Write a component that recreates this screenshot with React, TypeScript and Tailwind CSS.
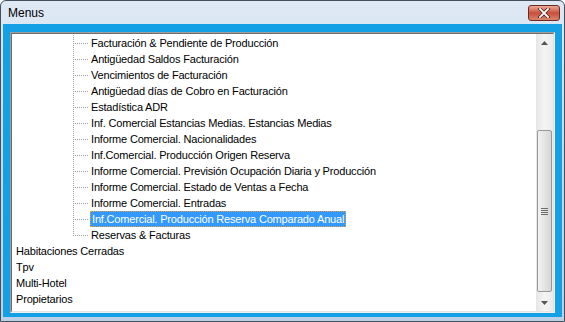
const CHILDREN = [
  'Facturación & Pendiente de Producción',
  'Antigüedad Saldos Facturación',
  'Vencimientos de Facturación',
  'Antigüedad días de Cobro en Facturación',
  'Estadística ADR',
  'Inf. Comercial Estancias Medias. Estancias Medias',
  'Informe Comercial. Nacionalidades',
  'Inf.Comercial. Producción Origen Reserva',
  'Informe Comercial. Previsión Ocupación Diaria y Producción',
  'Informe Comercial. Estado de Ventas a Fecha',
  'Informe Comercial. Entradas',
  'Inf.Comercial. Producción Reserva Comparado Anual',
  'Reservas & Facturas',
]
const SELECTED = 11

const ROOTS = ['Habitaciones Cerradas', 'Tpv', 'Multi-Hotel', 'Propietarios']

// dotted tree connector, 16x16, drawn as single pixels like the win32 treeview
function TreeLines({ last }: { last: boolean }) {
  const vEnd = last ? 9 : 16
  const dots = []
  for (let y = 0; y < vEnd; y += 2) dots.push(<rect key={'v' + y} x={0} y={y} width={1} height={1} />)
  for (let x = 2; x < 16; x += 2) dots.push(<rect key={'h' + x} x={x} y={8} width={1} height={1} />)
  return (
    <svg width="16" height="16" className="shrink-0" fill="#a0a0a0">
      {dots}
    </svg>
  )
}

function Arrow({ down }: { down?: boolean }) {
  return (
    <svg width="7" height="4" viewBox="0 0 7 4" fill="#555">
      {down ? <path d="M0 0h7L3.5 4z" /> : <path d="M0 4h7L3.5 0z" />}
    </svg>
  )
}

function ScrollBar() {
  return (
    <div className="w-[17px] shrink-0 flex flex-col bg-gradient-to-r from-[#e6e6e6] via-[#f4f4f4] to-[#ebebeb]">
      <div className="h-[17px] flex items-center justify-center">
        <Arrow />
      </div>
      <div className="flex-1 flex flex-col px-[1px]">
        <div className="mt-[79px] h-[162px] rounded-[2px] border border-[#979797] bg-gradient-to-r from-[#f2f2f2] to-[#d6d6d6] flex flex-col items-center justify-center gap-[1px]">
          <div className="w-[7px] h-px bg-[#6d6d6d]" />
          <div className="w-[7px] h-px bg-[#6d6d6d]" />
          <div className="w-[7px] h-px bg-[#6d6d6d]" />
          <div className="w-[7px] h-px bg-[#6d6d6d]" />
        </div>
      </div>
      <div className="h-[17px] flex items-center justify-center">
        <Arrow down />
      </div>
    </div>
  )
}

function CloseButton() {
  return (
    <div className="w-[32px] h-[16px] rounded-[3px] border border-[#6e2a21] bg-gradient-to-b from-[#e9a898] via-[#c8503b] to-[#d8826a] flex items-center justify-center">
      <svg width="14" height="10" viewBox="0 0 14 10">
        <path d="M3 1l8 8M11 1l-8 8" stroke="#4a1a14" strokeWidth="3.2" strokeLinecap="square" />
        <path d="M3 1l8 8M11 1l-8 8" stroke="#ffffff" strokeWidth="1.8" strokeLinecap="square" />
      </svg>
    </div>
  )
}

export default function App() {
  return (
    <div className="w-[565px] h-[322px] bg-white font-['Liberation_Sans',Arial,sans-serif]">
      <div className="h-full flex flex-col rounded-t-[6px] border border-[#42505e] bg-gradient-to-b from-[#dfe9f5] via-[#c7d9ec] to-[#bcd1e8]">
        {/* Title bar */}
        <div className="h-[23px] shrink-0 flex items-center justify-between pl-[7px] pr-[4px]">
          <span className="text-[12px] text-black">Menus</span>
          <CloseButton />
        </div>

        {/* Client area */}
        <div className="flex-1 flex mx-[2px] mb-[4px] bg-[#14a0e4] pt-[8px] pb-[4px] px-[7px]">
          <div className="flex-1 flex border border-[#a0a0a0] border-b-[#f0f0f0] border-r-[#f0f0f0]">
            <div className="flex-1 flex border border-[#6d6d6d] border-b-[#e3e3e3] border-r-[#e3e3e3] bg-white">
              <div className="flex-1 overflow-hidden pt-[1px] text-[11px] tracking-[-0.18px] text-black">
                {CHILDREN.map((label, i) => (
                  <div key={label} className="h-4 flex items-center pl-[61px]">
                    <TreeLines last={i === CHILDREN.length - 1} />
                    {i === SELECTED ? (
                      <span className="h-full flex items-center px-[1px] ml-[1px] bg-[#3399ff] text-white border border-dotted border-[#d8a040] whitespace-nowrap">
                        {label}
                      </span>
                    ) : (
                      <span className="px-[2px] whitespace-nowrap">{label}</span>
                    )}
                  </div>
                ))}
                {ROOTS.map((label) => (
                  <div key={label} className="h-4 flex items-center pl-[3px]">
                    <span className="px-[1px] whitespace-nowrap">{label}</span>
                  </div>
                ))}
              </div>
              <ScrollBar />
            </div>
          </div>
        </div>
      </div>
    </div>
  )
}
